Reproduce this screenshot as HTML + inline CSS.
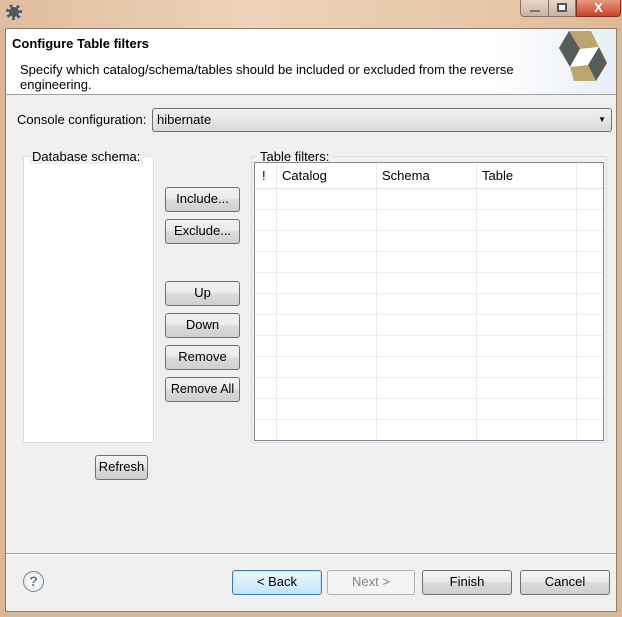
<!DOCTYPE html>
<html><head><style>
*{box-sizing:border-box;margin:0;padding:0}
body{width:622px;height:617px;overflow:hidden;position:relative;background:#d9b89a;font-family:"Liberation Sans","Noto Sans CJK SC",sans-serif;font-size:13px;color:#000}
.a{position:absolute}
.btn{position:absolute;border:1px solid #707070;border-radius:3px;background:linear-gradient(#f2f2f2,#ebebeb 45%,#dcdcdc 50%,#cfcfcf);text-align:center;font-size:13px;line-height:22px}
.g{position:absolute;border:1px solid #d5dfe5;border-radius:2px}
.lg{position:absolute;background:#f0f0f0;padding:0 3px;font-size:13px;top:-8px}
</style></head><body>
<div class="a" style="left:0;top:0;width:622px;height:28px;background:linear-gradient(90deg,#e0bd9c,#ecd3b9 40%,#e6c6a6 80%,#deb896)"></div>
<div class="a" style="left:6px;top:4px;width:16px;height:16px;border-radius:50%;background:#555;border:3px dotted #ccc"></div>
<div class="a" style="left:520px;top:0;width:29px;height:17px;border:1px solid #8a7060;border-top:none;border-radius:0 0 0 4px;background:linear-gradient(#e8d8cc,#c9b2a2)"><div class="a" style="left:9px;top:10px;width:10px;height:2px;background:#fff;border:1px solid #777"></div></div>
<div class="a" style="left:548px;top:0;width:28px;height:17px;border:1px solid #8a7060;border-top:none;background:linear-gradient(#e8d8cc,#c9b2a2)"><div class="a" style="left:8px;top:3px;width:10px;height:9px;border:2px solid #555;background:#fff"></div></div>
<div class="a" style="left:576px;top:0;width:45px;height:17px;border:1px solid #7a3020;border-top:none;border-radius:0 0 4px 0;background:linear-gradient(#e89a80,#c8422a);color:#fff;font-weight:bold;text-align:center;line-height:15px;font-size:13px">X</div>
<div class="a" style="left:5px;top:28px;width:612px;height:584px;background:#f0f0f0;border:1px solid #8c7a6a"></div>
<div class="a" style="left:6px;top:29px;width:610px;height:66px;background:linear-gradient(90deg,#fff 80%,#e8eef6);border-bottom:1px solid #a0a0a0"></div>
<div class="a" style="left:12px;top:36px;font-size:13px;font-weight:bold">Configure Table filters</div>
<div class="a" style="left:20px;top:62px;font-size:13px;line-height:15px;width:530px">Specify which catalog/schema/tables should be included or excluded from the reverse engineering.</div>
<svg class="a" style="left:558px;top:30px" width="50" height="53" viewBox="0 0 50 53">
<polygon points="11,1 33,1 41,17 22,19" fill="#bca56e"/>
<polygon points="11,1 22,19 12,37 1,18" fill="#555d58"/>
<polygon points="22,19 41,17 30,35 12,37" fill="#fff"/>
<polygon points="41,17 49,33 38,51 30,35" fill="#555d58"/>
<polygon points="12,37 30,35 38,51 16,51" fill="#bca56e"/>
</svg>
<div class="a" style="left:17px;top:112px;font-size:13px">Console configuration:</div>
<div class="a" style="left:152px;top:108px;width:460px;height:24px;border:1px solid #707070;border-radius:3px;background:linear-gradient(#f2f2f2,#e6e6e6 50%,#d9d9d9);padding-left:4px;line-height:22px;font-size:13px">hibernate<span style="position:absolute;right:5px;top:0;font-size:8px">▼</span></div>
<div class="g" style="left:23px;top:156px;width:131px;height:287px;background:#fff"><div class="lg" style="left:5px">Database schema:</div></div>
<div class="g" style="left:251px;top:156px;width:356px;height:287px"><div class="lg" style="left:5px">Table filters:</div></div>
<div class="a" style="left:254px;top:162px;width:350px;height:279px;background:#fff;border:1px solid #828790;overflow:hidden">
<div class="a" style="left:0;top:0;width:350px;height:26px;border-bottom:1px solid #e0e0e0;font-size:13px;line-height:26px">
<span class="a" style="left:7px">!</span><span class="a" style="left:27px">Catalog</span><span class="a" style="left:127px">Schema</span><span class="a" style="left:227px">Table</span></div>
<div class="a" style="left:21px;top:0;width:1px;height:280px;background:#e8e8ee"></div>
<div class="a" style="left:121px;top:0;width:1px;height:280px;background:#e8e8ee"></div>
<div class="a" style="left:221px;top:0;width:1px;height:280px;background:#e8e8ee"></div>
<div class="a" style="left:321px;top:0;width:1px;height:280px;background:#e8e8ee"></div>
<div class="a" style="left:0;top:26px;width:350px;height:254px;background:repeating-linear-gradient(transparent 0 20px,#eeeef2 20px 21px)"></div>
</div>
<div class="btn" style="left:165px;top:187px;width:75px;height:25px">Include...</div>
<div class="btn" style="left:165px;top:219px;width:75px;height:25px">Exclude...</div>
<div class="btn" style="left:165px;top:281px;width:75px;height:25px">Up</div>
<div class="btn" style="left:165px;top:313px;width:75px;height:25px">Down</div>
<div class="btn" style="left:165px;top:345px;width:75px;height:25px">Remove</div>
<div class="btn" style="left:165px;top:377px;width:75px;height:25px;font-size:12.5px">Remove All</div>
<div class="btn" style="left:95px;top:455px;width:53px;height:25px">Refresh</div>
<div class="a" style="left:6px;top:553px;width:610px;height:1px;background:#a0a0a0"></div>
<div class="a" style="left:6px;top:554px;width:610px;height:1px;background:#fff"></div>
<div class="a" style="left:23px;top:571px;width:21px;height:21px;border-radius:50%;border:1.5px solid #7a8590;background:radial-gradient(#fff,#e0e4e8);text-align:center;font-weight:bold;color:#6a7580;line-height:18px;font-size:14px">?</div>
<div class="btn" style="left:232px;top:570px;width:90px;height:25px;border-color:#3c7fb1;background:linear-gradient(#eaf6fd,#d9f0fc 50%,#bee6fd);box-shadow:inset 0 0 0 1px #bfe4f8">&lt; Back</div>
<div class="btn" style="left:327px;top:570px;width:88px;height:25px;border-color:#adb2b5;background:#f4f4f4;color:#838383">Next &gt;</div>
<div class="btn" style="left:422px;top:570px;width:90px;height:25px">Finish</div>
<div class="btn" style="left:520px;top:570px;width:90px;height:25px">Cancel</div>
</body></html>
